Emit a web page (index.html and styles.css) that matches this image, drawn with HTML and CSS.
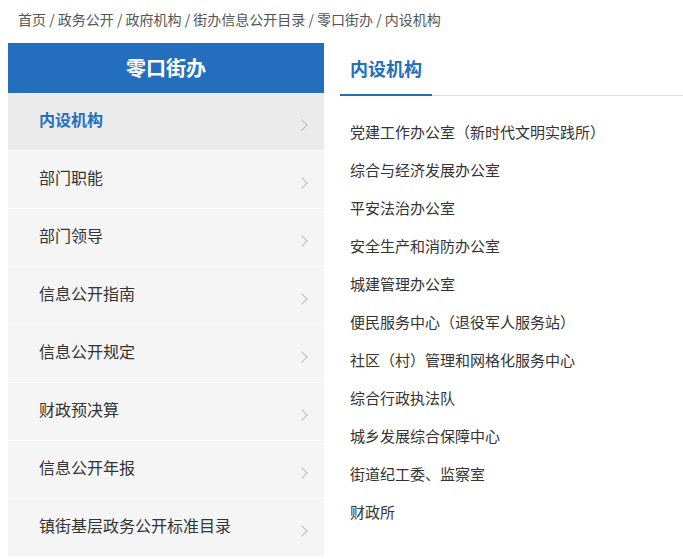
FILE: index.html
```html
<!DOCTYPE html>
<html lang="zh-CN">
<head>
  <meta charset="UTF-8" />
  <title>内设机构 - 零口街办</title>
  <link rel="stylesheet" href="styles.css">
</head>
<body>
  <div class="crumb">首页 / 政务公开 / 政府机构 / 街办信息公开目录 / 零口街办 / 内设机构</div>

  <div class="main">
    <div class="side">
      <div class="side-title">零口街办</div>
      <ul class="menu">
        <li class="active"><span>内设机构</span><i class="arrow"></i></li>
        <li><span>部门职能</span><i class="arrow"></i></li>
        <li><span>部门领导</span><i class="arrow"></i></li>
        <li><span>信息公开指南</span><i class="arrow"></i></li>
        <li><span>信息公开规定</span><i class="arrow"></i></li>
        <li><span>财政预决算</span><i class="arrow"></i></li>
        <li><span>信息公开年报</span><i class="arrow"></i></li>
        <li><span>镇街基层政务公开标准目录</span><i class="arrow"></i></li>
      </ul>
    </div>

    <div class="content">
      <div class="tabs"><span class="tab">内设机构</span></div>
      <ul class="list">
        <li>党建工作办公室（新时代文明实践所）</li>
        <li>综合与经济发展办公室</li>
        <li>平安法治办公室</li>
        <li>安全生产和消防办公室</li>
        <li>城建管理办公室</li>
        <li>便民服务中心（退役军人服务站）</li>
        <li>社区（村）管理和网格化服务中心</li>
        <li>综合行政执法队</li>
        <li>城乡发展综合保障中心</li>
        <li>街道纪工委、监察室</li>
        <li>财政所</li>
      </ul>
    </div>
  </div>
</body>
</html>
```

FILE: styles.css
```css
body {
  margin: 0;
  font-family: "Noto Sans CJK SC", "Liberation Sans", sans-serif;
  color: #333;
  background: #fff;
}
ul {
  list-style: none;
  margin: 0;
  padding: 0;
}
.crumb {
  font-size: 14px;
  line-height: 20px;
  color: #555;
  padding: 9px 0 0 18px;
  height: 34px;
}
.main {
  display: flex;
  padding-left: 8px;
  gap: 16px;
}
.side {
  width: 316px;
  flex-shrink: 0;
}
.side-title {
  height: 50px;
  line-height: 50px;
  background: #236fbd;
  color: #fff;
  font-size: 20px;
  font-weight: bold;
  text-align: center;
}
.menu li {
  height: 57px;
  border-bottom: 1px solid #fff;
  background: #f5f5f5;
  display: flex;
  align-items: center;
  justify-content: space-between;
  padding: 0 18px 0 31px;
  font-size: 16px;
}
.menu li span {
  margin-bottom: 6px;
}
.menu li.active {
  background: #ebebeb;
  color: #236fbd;
  font-weight: bold;
}
.arrow {
  width: 7px;
  height: 7px;
  border-top: 1px solid #bbb;
  border-right: 1px solid #bbb;
  transform: rotate(45deg);
  margin-top: 6px;
}
.content {
  flex: 1;
}
.tabs {
  height: 52px;
  border-bottom: 1px solid #ddd;
  display: flex;
}
.tab {
  padding: 0 10px;
  line-height: 50px;
  font-size: 18px;
  font-weight: bold;
  color: #236fbd;
  border-bottom: 2px solid #236fbd;
  margin-bottom: -1px;
}
.list {
  padding: 17px 0 0 10px;
}
.list li {
  font-size: 15px;
  line-height: 38px;
}
```
